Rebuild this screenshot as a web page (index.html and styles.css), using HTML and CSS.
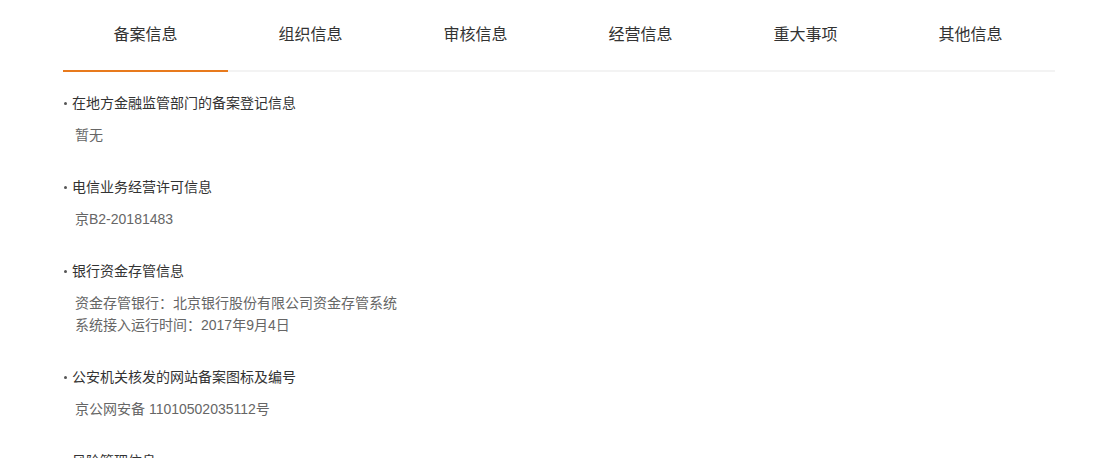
FILE: index.html
```html
<!DOCTYPE html>
<html>
<head>
  <meta charset="utf-8"/>
  <title>备案信息</title>
  <link rel="stylesheet" href="styles.css">
</head>
<body>
  <div class="wrap">
    <ul class="tabs">
      <li class="tab active">备案信息</li>
      <li class="tab">组织信息</li>
      <li class="tab">审核信息</li>
      <li class="tab">经营信息</li>
      <li class="tab">重大事项</li>
      <li class="tab">其他信息</li>
    </ul>

    <div class="info-list">
      <div class="info-item">
        <div class="info-title">在地方金融监管部门的备案登记信息</div>
        <div class="info-body">
          <p>暂无</p>
        </div>
      </div>

      <div class="info-item">
        <div class="info-title">电信业务经营许可信息</div>
        <div class="info-body">
          <p>京B2-20181483</p>
        </div>
      </div>

      <div class="info-item">
        <div class="info-title">银行资金存管信息</div>
        <div class="info-body">
          <p>资金存管银行：北京银行股份有限公司资金存管系统</p>
          <p>系统接入运行时间：2017年9月4日</p>
        </div>
      </div>

      <div class="info-item">
        <div class="info-title">公安机关核发的网站备案图标及编号</div>
        <div class="info-body">
          <p>京公网安备 11010502035112号</p>
        </div>
      </div>

      <div class="info-item">
        <div class="info-title">风险管理信息</div>
      </div>
    </div>
  </div>
</body>
</html>
```

FILE: styles.css
```css
body {
  margin: 0;
  background: #fff;
  font-family: "Liberation Sans", "Noto Sans CJK SC", sans-serif;
  color: #333;
}
.wrap {
  width: 992px;
  margin-left: 63px;
}
.tabs {
  display: flex;
  margin: 0;
  padding: 0 2px 0 0;
  list-style: none;
  border-bottom: 2px solid #f3f3f3;
}
.tab {
  flex: 1;
  height: 70px;
  line-height: 70px;
  margin-bottom: -2px;
  border-bottom: 2px solid transparent;
  text-align: center;
  font-size: 16px;
  color: #333;
  cursor: pointer;
}
.tab.active {
  border-bottom-color: #e87a1d;
}
.info-list {
  padding-top: 20px;
}
.info-item {
  margin-bottom: 30px;
}
.info-title {
  position: relative;
  padding-left: 9px;
  line-height: 22px;
  font-size: 14px;
  color: #333;
}
.info-title::before {
  content: "";
  position: absolute;
  left: 1px;
  top: 10px;
  width: 3px;
  height: 3px;
  border-radius: 50%;
  background: #555;
}
.info-body {
  margin-top: 10px;
  padding-left: 12px;
  font-size: 14px;
  color: #666;
}
.info-body p {
  margin: 0;
  line-height: 22px;
}
```
